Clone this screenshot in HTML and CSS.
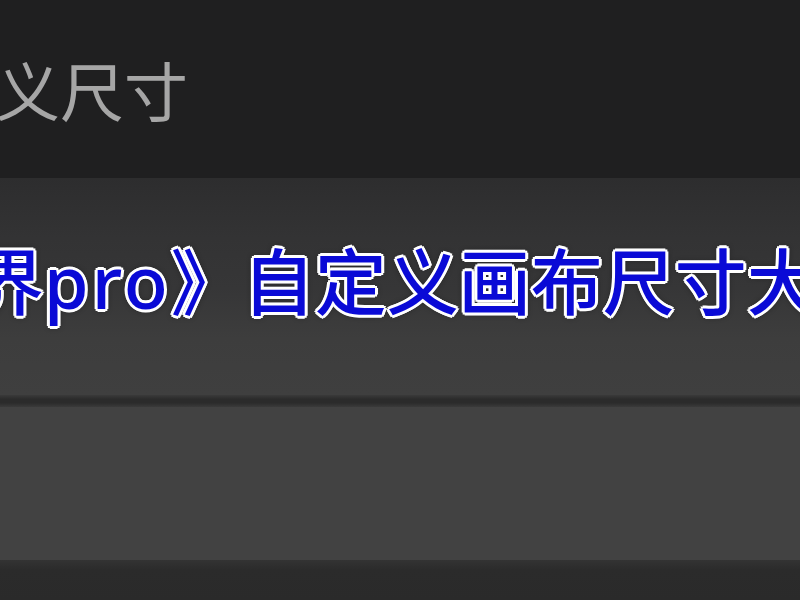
FILE: index.html
```html
<!DOCTYPE html>
<html lang="zh">
<head>
<meta charset="utf-8">
<link rel="stylesheet" href="styles.css">
</head>
<body>
<div class="page">
  <div class="top"><span class="title">义尺寸</span></div>
  <div class="band"><span class="caption">界<span class="latin">pro</span>》自定义画布尺寸大小</span></div>
  <div class="sep"></div>
  <div class="panel"></div>
  <div class="bottom"></div>
</div>
</body>
</html>
```
FILE: styles.css
```css
html, body {
  margin: 0;
  padding: 0;
  background: #1f1f20;
  width: 800px;
  height: 600px;
  overflow: hidden;
}
.page {
  display: flex;
  flex-direction: column;
  width: 800px;
  height: 600px;
  overflow: hidden;
  font-family: "Noto Sans CJK SC", "Noto Sans", sans-serif;
}
.top {
  height: 178px;
  background: #1f1f20;
  box-sizing: border-box;
  padding-top: 56px;
}
.title {
  display: block;
  margin-left: -4px;
  font-size: 64px;
  line-height: 64px;
  color: #a6a6a6;
  white-space: nowrap;
  filter: blur(0.6px);
}
.band {
  height: 217px;
  box-sizing: border-box;
  padding-top: 64px;
  background: linear-gradient(#2d2d2e 0px, #333334 60px, #363637 110px, #3d3d3d 160px, #3f3f3f 217px);
  overflow: hidden;
  white-space: nowrap;
}
.caption {
  display: block;
  margin-left: -28px;
  font-size: 72px;
  line-height: 72px;
  font-weight: 500;
  color: #0a0ad6;
  white-space: nowrap;
  text-shadow:
    3px 0 0 #fff, -3px 0 0 #fff, 0 3px 0 #fff, 0 -3px 0 #fff,
    2px 2px 0 #fff, -2px 2px 0 #fff, 2px -2px 0 #fff, -2px -2px 0 #fff,
    0 0 6px #111;
}
.latin {
  font-family: "Noto Sans", sans-serif;
  font-weight: 500;
  letter-spacing: 3px;
}
.sep {
  height: 12px;
  background: linear-gradient(#3a3a3a, #2b2b2b 35%, #2b2b2b 65%, #3a3a3a);
}
.panel {
  height: 153px;
  background: #424242;
}
.bottom {
  flex: 1;
  background: linear-gradient(#333 0px, #2b2b2b 10px, #2a2a2a);
}
```
